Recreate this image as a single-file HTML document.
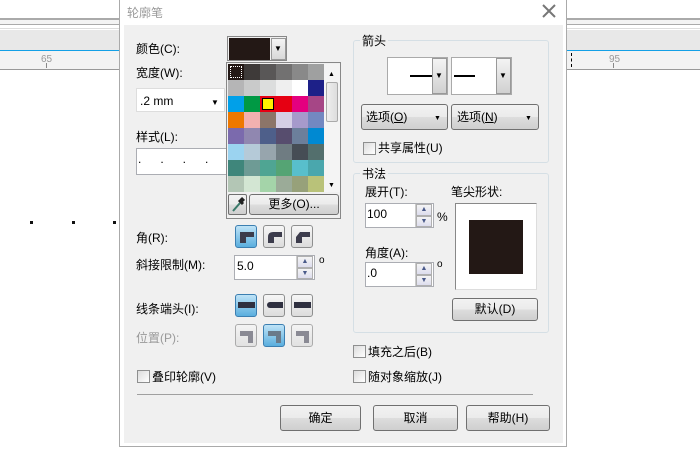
<!DOCTYPE html>
<html><head><meta charset="utf-8"><style>
*{margin:0;padding:0;box-sizing:border-box}
body{width:700px;height:450px;position:relative;overflow:hidden;background:#fff;font-family:"Liberation Sans","Noto Sans CJK SC",sans-serif;font-size:12px;color:#000}
.a{position:absolute}
.t{position:absolute;white-space:nowrap;line-height:14px}
.btn{position:absolute;border:1px solid #707070;border-radius:3px;background:linear-gradient(#f2f2f2,#ebebeb 50%,#dddddd 51%,#cfcfcf);text-align:center}
.inp{position:absolute;background:#fff;border:1px solid #abadb3}
.cb{position:absolute;width:13px;height:13px;border:1px solid #8e8f8f;background:linear-gradient(135deg,#dcdcdc,#fff)}
.ib{position:absolute;width:22px;height:23px;border:1px solid #8e8f8f;border-radius:3px;background:linear-gradient(#f6f6f6,#dcdcdc)}
.ib.on{background:linear-gradient(#bfe3f7,#5aaede);border-color:#3c7fb1}
.grp{position:absolute;border:1px solid #d5dfe5;border-radius:3px}
.spin{position:absolute;width:17px;border-left:1px solid #ccc}
.spin div{height:50%;border:1px solid #b0b0b0;background:linear-gradient(#f4f4f4,#dde);font-size:7px;text-align:center;color:#4a5a8a;line-height:9px}
</style></head><body>
<!-- background app -->
<div class="a" style="left:0;top:18px;width:700px;height:2px;background:#aaa"></div>
<div class="a" style="left:0;top:20px;width:700px;height:4px;background:#f3f3f3"></div>
<div class="a" style="left:0;top:24px;width:700px;height:1px;background:#aaa"></div>
<div class="a" style="left:0;top:28px;width:700px;height:1px;background:#ddd"></div>
<div class="a" style="left:0;top:30px;width:700px;height:20px;background:#e8e8e8"></div>
<div class="a" style="left:0;top:50px;width:700px;height:1px;background:#14a0e6"></div>
<div class="a" style="left:0;top:51px;width:700px;height:18px;background:#f3f3f3"></div>
<div class="a" style="left:0;top:69px;width:700px;height:1px;background:#999"></div>
<div class="t" style="left:41px;top:53px;font-size:10px;color:#999">65</div>
<div class="t" style="left:609px;top:53px;font-size:10px;color:#999">95</div>
<div class="a" style="left:46px;top:63px;width:1px;height:5px;background:#888"></div>
<div class="a" style="left:613px;top:63px;width:1px;height:5px;background:#888"></div>
<div class="a" style="left:571px;top:53px;width:1px;height:14px;border-left:1px dashed #000"></div>
<div class="a" style="left:30px;top:221px;width:3px;height:3px;background:#111"></div>
<div class="a" style="left:72px;top:221px;width:3px;height:3px;background:#111"></div>
<div class="a" style="left:113px;top:221px;width:3px;height:3px;background:#111"></div>
<!-- dialog -->
<div class="a" style="left:119px;top:0;width:448px;height:447px;background:#fff;border:1px solid #aaa;border-top:none"></div>
<div class="a" style="left:124px;top:25px;width:439px;height:418px;background:#f0f0f0"></div>
<div class="t" style="left:127px;top:6px;color:#999;font-size:12px">轮廓笔</div>
<svg class="a" style="left:542px;top:4px" width="14" height="14"><path d="M1 1L13 13M13 1L1 13" stroke="#777" stroke-width="2"/></svg>

<div class="t" style="left:136px;top:42px">颜色(C):</div>
<div class="a" style="left:227px;top:36px;width:60px;height:25px;border:1px solid #888;background:#f0f0f0"></div>
<div class="a" style="left:229px;top:38px;width:41px;height:22px;background:#231815"></div>
<div class="a" style="left:271px;top:38px;width:15px;height:22px;background:linear-gradient(#f4f4f4,#d8d8d8);border:1px solid #999"></div>
<div class="t" style="left:274px;top:42px;font-size:8px">▼</div>
<div class="t" style="left:136px;top:66px">宽度(W):</div>
<div class="inp" style="left:136px;top:88px;width:89px;height:24px;border-color:#ddd"></div>
<div class="t" style="left:140px;top:94px">.2 mm</div>
<div class="t" style="left:211px;top:96px;font-size:8px">▼</div>
<div class="t" style="left:136px;top:130px">样式(L):</div>
<div class="inp" style="left:136px;top:148px;width:100px;height:27px"></div>
<div class="t" style="left:138px;top:152px;letter-spacing:19px">....</div>

<!-- palette popup -->
<div class="a" style="left:226px;top:62px;width:115px;height:157px;background:#f0f0f0;border:1px solid #888"></div>
<div class="a" style="left:228px;top:64px;width:96px;height:128px;display:grid;grid-template-columns:repeat(6,16px);grid-auto-rows:16px">
<div style="background:#231815;outline:1px dotted #fff;outline-offset:-3px"></div><div style="background:#3e3a39"></div><div style="background:#595757"></div><div style="background:#727171"></div><div style="background:#898989"></div><div style="background:#9fa0a0"></div>
<div style="background:#b5b5b6"></div><div style="background:#c9caca"></div><div style="background:#dcdddd"></div><div style="background:#efefef"></div><div style="background:#fff"></div><div style="background:#1d2088"></div>
<div style="background:#00a0e9"></div><div style="background:#009944"></div><div style="background:#fff100;border:2px solid #e60012;box-shadow:inset 0 0 0 1px #000"></div><div style="background:#e60012"></div><div style="background:#e4007f"></div><div style="background:#a64686"></div>
<div style="background:#ee7800"></div><div style="background:#f2b1b0"></div><div style="background:#8c7569"></div><div style="background:#d5cfe5"></div><div style="background:#a69acb"></div><div style="background:#7388c1"></div>
<div style="background:#7b6aad"></div><div style="background:#9087b0"></div><div style="background:#4e5f8a"></div><div style="background:#574d6e"></div><div style="background:#6c7f9b"></div><div style="background:#0089d2"></div>
<div style="background:#9bd3f0"></div><div style="background:#b5cad8"></div><div style="background:#97a5ad"></div><div style="background:#6f7c82"></div><div style="background:#464d55"></div><div style="background:#536f6d"></div>
<div style="background:#3f867b"></div><div style="background:#6e9b95"></div><div style="background:#4fa593"></div><div style="background:#55a474"></div><div style="background:#58bfcc"></div><div style="background:#4aa7ad"></div>
<div style="background:#b3c6b5"></div><div style="background:#d3e6d3"></div><div style="background:#a4d4a9"></div><div style="background:#9bab98"></div><div style="background:#97a17a"></div><div style="background:#b9c279"></div>
</div>
<div class="a" style="left:324px;top:64px;width:16px;height:128px;background:#f4f4f4"></div>
<div class="a" style="left:326px;top:82px;width:12px;height:40px;border:1px solid #aaa;border-radius:2px;background:linear-gradient(90deg,#eee,#ddd)"></div>
<div class="t" style="left:328px;top:68px;font-size:7px">▲</div>
<div class="t" style="left:328px;top:179px;font-size:7px">▼</div>
<div class="btn" style="left:228px;top:194px;width:19px;height:21px;border-radius:2px"></div>
<svg class="a" style="left:231px;top:196px" width="14" height="17"><path d="M2 15L9 7" stroke="#3a7a6a" stroke-width="2"/><path d="M8 4L12 8M10 2L13 5" stroke="#222" stroke-width="3"/></svg>
<div class="btn" style="left:249px;top:194px;width:90px;height:21px;line-height:19px">更多(O)...</div>

<!-- corners -->
<div class="t" style="left:136px;top:231px">角(R):</div>
<div class="ib on" style="left:235px;top:225px"></div><div class="ib" style="left:263px;top:225px"></div><div class="ib" style="left:291px;top:225px"></div>
<svg class="a" style="left:239px;top:230px" width="16" height="14"><path d="M1 2H15V7H7V13H1Z" fill="#3c3c4c"/></svg>
<svg class="a" style="left:267px;top:230px" width="16" height="14"><path d="M1 7Q1 2 6 2H15V7H7V13H1Z" fill="#3c3c4c"/></svg>
<svg class="a" style="left:295px;top:230px" width="16" height="14"><path d="M1 7L5 2H15V7H7V13H1Z" fill="#3c3c4c"/></svg>
<div class="t" style="left:136px;top:258px">斜接限制(M):</div>
<div class="inp" style="left:234px;top:255px;width:81px;height:25px"></div>
<div class="t" style="left:237px;top:259px">5.0</div>
<div class="spin" style="left:296px;top:256px;height:23px"><div>▲</div><div>▼</div></div>
<div class="t" style="left:319px;top:254px;font-size:10px">o</div>
<div class="t" style="left:136px;top:302px">线条端头(I):</div>
<div class="ib on" style="left:235px;top:294px"></div><div class="ib" style="left:263px;top:294px"></div><div class="ib" style="left:291px;top:294px"></div>
<div class="a" style="left:238px;top:302px;width:17px;height:6px;background:#2f3040"></div>
<div class="a" style="left:267px;top:302px;width:16px;height:6px;background:#2f3040;border-radius:3px 0 0 3px"></div>
<div class="a" style="left:294px;top:302px;width:17px;height:6px;background:#2f3040"></div>
<div class="t" style="left:136px;top:331px;color:#999">位置(P):</div>
<div class="ib" style="left:235px;top:324px;opacity:.7"></div><div class="ib on" style="left:263px;top:324px"></div><div class="ib" style="left:291px;top:324px;opacity:.7"></div>
<svg class="a" style="left:239px;top:329px" width="16" height="16"><path d="M1 2H14V14H9V7H1Z" fill="#8a8a94"/></svg>
<svg class="a" style="left:267px;top:329px" width="16" height="16"><path d="M1 2H14V14H9V7H1Z" fill="#6a7a8a"/></svg>
<svg class="a" style="left:295px;top:329px" width="16" height="16"><path d="M1 2H14V14H9V7H1Z" fill="#8a8a94"/></svg>
<div class="cb" style="left:137px;top:370px"></div>
<div class="t" style="left:152px;top:370px">叠印轮廓(V)</div>
<div class="a" style="left:137px;top:394px;width:396px;height:1px;background:#a0a0a0"></div>

<!-- arrows group -->
<div class="grp" style="left:353px;top:40px;width:196px;height:123px"></div>
<div class="t" style="left:360px;top:34px;background:#f0f0f0;padding:0 2px">箭头</div>
<div class="a" style="left:387px;top:57px;width:61px;height:38px;background:#fff;border:1px solid #aaa"></div>
<div class="a" style="left:410px;top:75px;width:22px;height:2px;background:#000"></div>
<div class="a" style="left:432px;top:58px;width:15px;height:36px;background:linear-gradient(#f4f4f4,#d0d0d0);border:1px solid #999"></div>
<div class="t" style="left:435px;top:69px;font-size:8px">▼</div>
<div class="a" style="left:451px;top:57px;width:61px;height:38px;background:#fff;border:1px solid #aaa"></div>
<div class="a" style="left:454px;top:75px;width:21px;height:2px;background:#000"></div>
<div class="a" style="left:496px;top:58px;width:15px;height:36px;background:linear-gradient(#f4f4f4,#d0d0d0);border:1px solid #999"></div>
<div class="t" style="left:499px;top:69px;font-size:8px">▼</div>
<div class="btn" style="left:361px;top:104px;width:87px;height:26px"></div>
<div class="t" style="left:366px;top:110px">选项(<u>O</u>)</div><div class="t" style="left:434px;top:112px;font-size:7px">▼</div>
<div class="btn" style="left:451px;top:104px;width:88px;height:26px"></div>
<div class="t" style="left:457px;top:110px">选项(<u>N</u>)</div><div class="t" style="left:525px;top:112px;font-size:7px">▼</div>
<div class="cb" style="left:363px;top:142px"></div>
<div class="t" style="left:378px;top:141px">共享属性(U)</div>

<!-- calligraphy -->
<div class="grp" style="left:353px;top:173px;width:196px;height:160px"></div>
<div class="t" style="left:360px;top:167px;background:#f0f0f0;padding:0 2px">书法</div>
<div class="t" style="left:365px;top:185px">展开(T):</div>
<div class="inp" style="left:365px;top:203px;width:69px;height:25px"></div>
<div class="t" style="left:367px;top:207px">100</div>
<div class="spin" style="left:415px;top:204px;height:23px"><div>▲</div><div>▼</div></div>
<div class="t" style="left:437px;top:210px">%</div>
<div class="t" style="left:451px;top:185px">笔尖形状:</div>
<div class="a" style="left:455px;top:203px;width:82px;height:87px;background:#fff;border:1px solid #888;border-right-color:#ddd;border-bottom-color:#ddd"></div>
<div class="a" style="left:469px;top:220px;width:54px;height:54px;background:#231815"></div>
<div class="t" style="left:365px;top:246px">角度(A):</div>
<div class="inp" style="left:365px;top:262px;width:69px;height:25px"></div>
<div class="t" style="left:367px;top:266px">.0</div>
<div class="spin" style="left:415px;top:263px;height:23px"><div>▲</div><div>▼</div></div>
<div class="t" style="left:437px;top:258px;font-size:10px">o</div>
<div class="btn" style="left:452px;top:298px;width:86px;height:23px;line-height:21px">默认(D)</div>
<div class="cb" style="left:353px;top:345px"></div>
<div class="t" style="left:368px;top:345px">填充之后(B)</div>
<div class="cb" style="left:353px;top:370px"></div>
<div class="t" style="left:368px;top:370px">随对象缩放(J)</div>

<div class="btn" style="left:280px;top:405px;width:81px;height:26px;line-height:24px">确定</div>
<div class="btn" style="left:373px;top:405px;width:85px;height:26px;line-height:24px">取消</div>
<div class="btn" style="left:466px;top:405px;width:84px;height:26px;line-height:24px">帮助(H)</div>
</body></html>
